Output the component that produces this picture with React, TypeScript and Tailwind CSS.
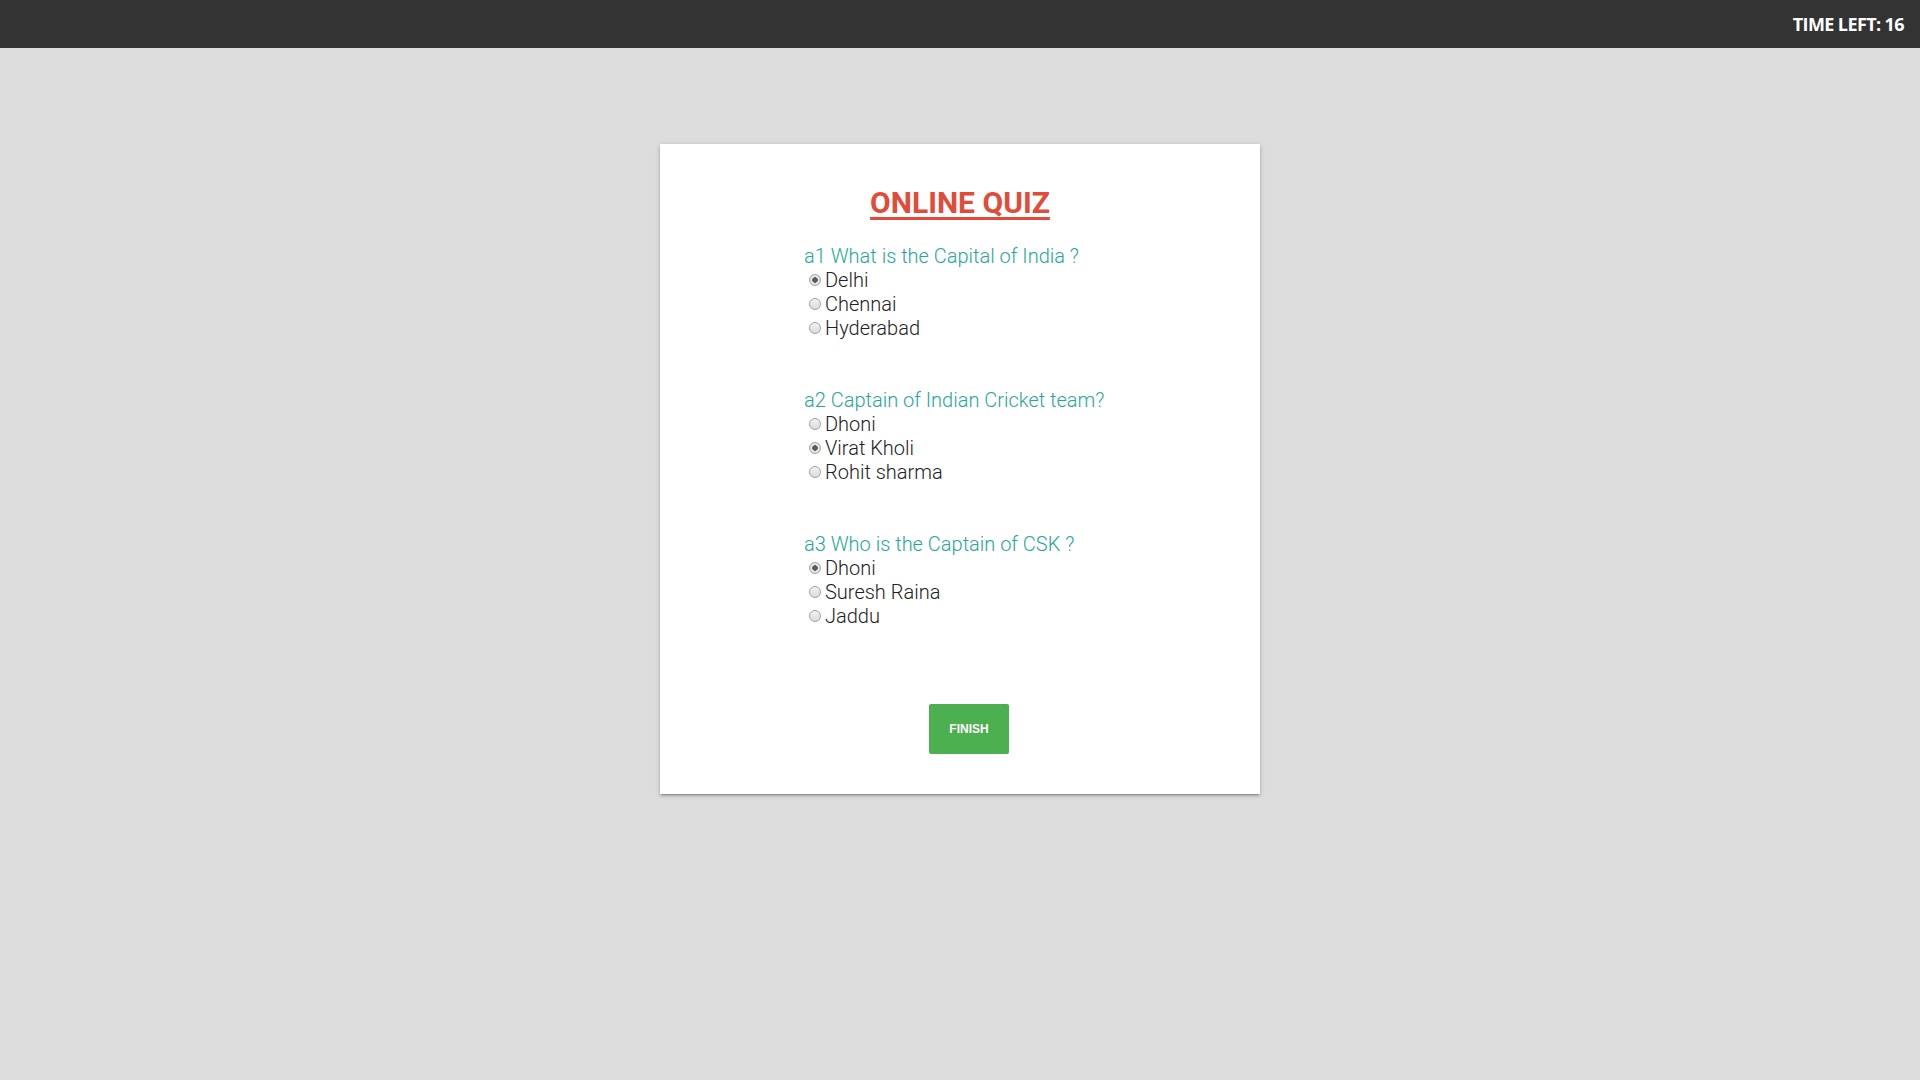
import { useState } from "react";

type Question = {
  id: string;
  label: string;
  options: string[];
};

const questions: Question[] = [
  { id: "a1", label: "a1 What is the Capital of India ?", options: ["Delhi", "Chennai", "Hyderabad"] },
  { id: "a2", label: "a2 Captain of Indian Cricket team?", options: ["Dhoni", "Virat Kholi", "Rohit sharma"] },
  { id: "a3", label: "a3 Who is the Captain of CSK ?", options: ["Dhoni", "Suresh Raina", "Jaddu"] },
];

function QuestionBlock({
  question,
  value,
  onChange,
}: {
  question: Question;
  value: string;
  onChange: (v: string) => void;
}) {
  return (
    <div className="flex flex-col">
      <p className="m-0 text-[20px] leading-[24px] font-light text-[#26a69a]">{question.label}</p>
      {question.options.map((opt) => (
        <label key={opt} className="flex items-center h-[24px] text-[20px] leading-[24px] font-light text-[#222] cursor-pointer">
          <input
            type="radio"
            name={question.id}
            checked={value === opt}
            onChange={() => onChange(opt)}
            className="appearance-none w-[12px] h-[12px] ml-[5px] mr-[4px] rounded-full border border-[#a3a3a3] bg-[linear-gradient(#f2f2f2,#dcdcdc)] checked:bg-[radial-gradient(circle,#5a5a5a_0_2.5px,#e4e4e4_3px)]"
          />
          {opt}
        </label>
      ))}
    </div>
  );
}

export default function App() {
  const [answers, setAnswers] = useState<Record<string, string>>({
    a1: "Delhi",
    a2: "Virat Kholi",
    a3: "Dhoni",
  });

  return (
    <div className="min-h-screen w-full bg-[#dddddd] font-['Roboto',sans-serif]">
      <header className="h-[48px] bg-[#333333] flex items-center justify-end pr-[16px]">
        <span className="font-['Open_Sans',sans-serif] font-bold text-[18px] tracking-[-0.6px] text-white">
          TIME LEFT: 16
        </span>
      </header>

      <div className="mx-auto mt-[96px] w-[600px] bg-white pt-[41px] pb-[40px] shadow-[0_2px_2px_0_rgba(0,0,0,0.14),0_3px_1px_-2px_rgba(0,0,0,0.12),0_1px_5px_0_rgba(0,0,0,0.2)]">
        <h1 className="text-center text-[30px] leading-[36px] font-bold text-[#e04b3a] underline decoration-[3px] underline-offset-[4px]">
          ONLINE QUIZ
        </h1>

        <form className="mt-[23px] pl-[144px] flex flex-col gap-[48px]">
          {questions.map((q) => (
            <QuestionBlock
              key={q.id}
              question={q}
              value={answers[q.id]}
              onChange={(v) => setAnswers((prev) => ({ ...prev, [q.id]: v }))}
            />
          ))}
        </form>

        <div className="mt-[76px] flex justify-center pl-[18px]">
          <button
            type="button"
            className="w-[80px] h-[50px] rounded-[2px] bg-[#4caf50] text-white font-['Liberation_Sans',sans-serif] font-bold text-[12px]"
          >
            FINISH
          </button>
        </div>
      </div>
    </div>
  );
}
